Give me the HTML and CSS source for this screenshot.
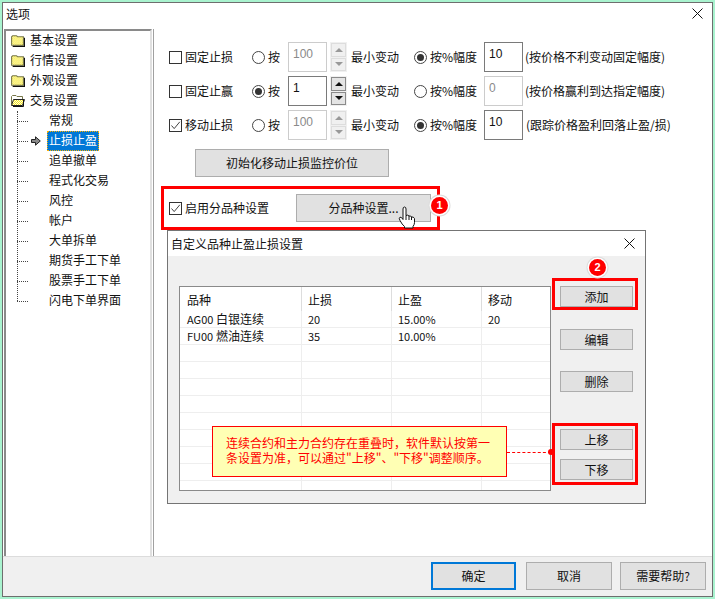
FILE: index.html
```html
<!DOCTYPE html>
<html lang="zh-CN">
<head>
<meta charset="utf-8">
<title>选项</title>
<link rel="stylesheet" href="styles.css">
</head>
<body>
<svg class="defs" aria-hidden="true">
  <defs>
    <pattern id="dither" width="2" height="2" patternUnits="userSpaceOnUse">
      <rect width="2" height="2" fill="#fffde0"/>
      <rect width="1" height="1" fill="#f4e620"/>
      <rect x="1" y="1" width="1" height="1" fill="#f4e620"/>
    </pattern>
    <symbol id="folder" viewBox="0 0 14 12">
      <path d="M1.5 10.5V2.5L2.5 1.5H6L7 2.5H12.5V10.5Z" fill="url(#dither)" stroke="#77774a"/>
      <path d="M13.5 3.5V11.5H2.5" fill="none" stroke="#111"/>
    </symbol>
    <symbol id="folder-open" viewBox="0 0 15 13">
      <path d="M1.5 10.5V2.5L2.5 1.5H6L7 2.5H12.5V5.5" fill="#fff" stroke="#77774a"/>
      <path d="M1.5 11.5L3.5 5.5H14.5L12.5 11.5Z" fill="url(#dither)" stroke="#222"/>
      <path d="M13.5 6V12.5H3" fill="none" stroke="#111"/>
    </symbol>
    <symbol id="tick" viewBox="0 0 11 11">
      <path d="M1.5 5.5L4.2 8.6L9.8 1.8" fill="none" stroke="#444" stroke-width="1"/>
    </symbol>
    <symbol id="cross" viewBox="0 0 11 11">
      <path d="M0.5 0.5L10.5 10.5M10.5 0.5L0.5 10.5" fill="none" stroke="#111" stroke-width="1"/>
    </symbol>
  </defs>
</svg>

<div class="window">
  <header class="titlebar">
    <span>选项</span>
    <svg class="close"><use href="#cross"/></svg>
  </header>

  <div class="main">
    <nav class="tree">
      <div class="node"><svg class="folder"><use href="#folder"/></svg>基本设置</div>
      <div class="node"><svg class="folder"><use href="#folder"/></svg>行情设置</div>
      <div class="node"><svg class="folder"><use href="#folder"/></svg>外观设置</div>
      <div class="node"><svg class="folder"><use href="#folder-open"/></svg>交易设置</div>
      <div class="kids">
        <div class="kid"><span class="slot"></span><span class="kid-text">常规</span></div>
        <div class="kid"><span class="slot"><svg class="arrow" viewBox="0 0 10 10"><path d="M0.5 3.5H4.5V0.8L9.3 5L4.5 9.2V6.5H0.5Z" fill="#8a8a8a" stroke="#222"/></svg></span><span class="kid-text selected">止损止盈</span></div>
        <div class="kid"><span class="slot"></span><span class="kid-text">追单撤单</span></div>
        <div class="kid"><span class="slot"></span><span class="kid-text">程式化交易</span></div>
        <div class="kid"><span class="slot"></span><span class="kid-text">风控</span></div>
        <div class="kid"><span class="slot"></span><span class="kid-text">帐户</span></div>
        <div class="kid"><span class="slot"></span><span class="kid-text">大单拆单</span></div>
        <div class="kid"><span class="slot"></span><span class="kid-text">期货手工下单</span></div>
        <div class="kid"><span class="slot"></span><span class="kid-text">股票手工下单</span></div>
        <div class="kid"><span class="slot"></span><span class="kid-text">闪电下单界面</span></div>
      </div>
    </nav>

    <section class="panel">
      <div class="grid">
        <label class="opt"><span class="check"></span>固定止损</label>
        <label class="opt"><span class="radio"></span>按</label>
        <div class="field off">100</div>
        <div class="spin off"><span class="up"></span><span class="down"></span></div>
        <span class="txt">最小变动</span>
        <label class="opt"><span class="radio on"></span>按%幅度</label>
        <div class="field">10</div>
        <span class="txt">(按价格不利变动固定幅度)</span>

        <label class="opt"><span class="check"></span>固定止赢</label>
        <label class="opt"><span class="radio on"></span>按</label>
        <div class="field">1</div>
        <div class="spin"><span class="up"></span><span class="down"></span></div>
        <span class="txt">最小变动</span>
        <label class="opt"><span class="radio"></span>按%幅度</label>
        <div class="field off">0</div>
        <span class="txt">(按价格赢利到达指定幅度)</span>

        <label class="opt"><span class="check"><svg class="tick"><use href="#tick"/></svg></span>移动止损</label>
        <label class="opt"><span class="radio"></span>按</label>
        <div class="field off">100</div>
        <div class="spin off"><span class="up"></span><span class="down"></span></div>
        <span class="txt">最小变动</span>
        <label class="opt"><span class="radio on"></span>按%幅度</label>
        <div class="field">10</div>
        <span class="txt shift">(跟踪价格盈利回落止盈/损)</span>
      </div>

      <button class="btn init">初始化移动止损监控价位</button>

      <div class="red-bar">
        <label class="opt"><span class="check"><svg class="tick"><use href="#tick"/></svg></span>启用分品种设置</label>
        <button class="btn variety">分品种设置...</button>
        <svg class="hand" viewBox="0 0 18 23">
          <path d="M5 3Q5 1 6.5 1Q8 1 8 3V9.5Q10 8.5 11 10Q13 9.5 13.5 11Q15.5 10.5 16.5 12.5V16.5Q16.5 18.5 15 20.5V22H6.5V20.5Q4 18.5 2 14.5Q0.5 11.8 2 11.2Q3.5 10.8 5 13.5Z" fill="#fff" stroke="#111"/>
          <path d="M8 9.5V14M11 10V14M13.5 11V14" fill="none" stroke="#111"/>
        </svg>
        <span class="badge one">1</span>
      </div>

      <div class="dialog">
        <header class="dialog-title">
          <span>自定义品种止盈止损设置</span>
          <svg class="close"><use href="#cross"/></svg>
        </header>
        <div class="dialog-body">
          <div class="table-wrap">
            <table class="table">
              <colgroup><col class="c1"><col class="c2"><col class="c3"><col class="c4"></colgroup>
              <thead><tr><th>品种</th><th>止损</th><th>止盈</th><th>移动</th></tr></thead>
              <tbody>
                <tr><td><span class="lat">AG00</span> 白银连续</td><td class="lat">20</td><td class="lat">15.00%</td><td class="lat">20</td></tr>
                <tr><td><span class="lat">FU00</span> 燃油连续</td><td class="lat">35</td><td class="lat">10.00%</td><td></td></tr>
                <tr><td></td><td></td><td></td><td></td></tr>
                <tr><td></td><td></td><td></td><td></td></tr>
                <tr><td></td><td></td><td></td><td></td></tr>
                <tr><td></td><td></td><td></td><td></td></tr>
                <tr><td></td><td></td><td></td><td></td></tr>
                <tr><td></td><td></td><td></td><td></td></tr>
                <tr><td></td><td></td><td></td><td></td></tr>
                <tr><td></td><td></td><td></td><td></td></tr>
                <tr><td></td><td></td><td></td><td></td></tr>
              </tbody>
            </table>
          </div>
          <div class="actions">
            <div class="red-add"><button class="btn act">添加</button></div>
            <button class="btn act plain edit">编辑</button>
            <button class="btn act plain del">删除</button>
            <div class="red-move">
              <button class="btn act">上移</button>
              <button class="btn act">下移</button>
            </div>
          </div>
        </div>
        <span class="badge two">2</span>
        <div class="note">连续合约和主力合约存在重叠时，软件默认按第一条设置为准，可以通过"上移"、"下移"调整顺序。</div>
        <div class="connector"></div>
        <div class="connector-dot"></div>
      </div>
    </section>
  </div>

  <footer class="footer">
    <button class="btn foot primary">确定</button>
    <button class="btn foot">取消</button>
    <button class="btn foot help">需要帮助?</button>
  </footer>
</div>
</body>
</html>
```

FILE: styles.css
```css
* { box-sizing: border-box; }

html, body {
  margin: 0;
  padding: 0;
  width: 715px;
  height: 599px;
  overflow: hidden;
  background: #a9f3cf;
}

body {
  padding: 2px;
  font: 12px/16px "Noto Sans CJK SC", "Noto Sans", sans-serif;
  color: #111;
}

.defs { display: block; width: 0; height: 0; }

.window {
  width: 711px;
  height: 595px;
  border: 1px solid #6e6e6e;
  background: #fff;
  display: flex;
  flex-direction: column;
}

.titlebar {
  height: 26px;
  flex: none;
  display: flex;
  align-items: center;
  justify-content: space-between;
  padding: 0 9px 5px 3px;
}

.close { width: 11px; height: 11px; flex: none; }

.main { flex: none; height: 527px; display: flex; }

/* tree */
.tree {
  width: 148px;
  margin-left: 1px;
  border-top: 2px solid #8a8a8a;
  border-left: 2px solid #8a8a8a;
  border-right: 2px solid #e0e0e0;
  flex: none;
}

.node {
  height: 20px;
  display: flex;
  align-items: center;
  gap: 5px;
  padding: 0 0 2px 4px;
}

.folder { width: 15px; height: 13px; flex: none; }

.kids { position: relative; margin-left: 11px; }

.kids::before {
  content: "";
  position: absolute;
  left: 0;
  top: 0;
  bottom: 10px;
  border-left: 1px dotted #444;
}

.kid { height: 20px; display: flex; align-items: center; }

.kid::before {
  content: "";
  width: 11px;
  flex: none;
  border-top: 1px dotted #444;
}

.slot {
  width: 19px;
  flex: none;
  display: flex;
  padding-left: 3px;
}

.arrow { width: 10px; height: 10px; }

.kid-text {
  height: 20px;
  line-height: 16px;
  padding: 0 1px;
  border: 1px solid transparent;
}

.kid-text.selected {
  background: #0078d7;
  color: #fff;
  border: 1px dotted #ffb000;
}

/* panel */
.panel {
  position: relative;
  flex: 1;
  margin-left: 1px;
  border-left: 1px solid #a0a0a0;
  padding: 13px 0 0 7px;
}

.grid {
  display: grid;
  grid-template-columns: 83px 36px 42px 21px 63px 70px 41px auto;
  grid-auto-rows: 30px;
  row-gap: 4px;
  align-items: center;
  margin-left: 8px;
}

.opt { display: flex; align-items: center; gap: 3px; }

.check {
  width: 13px;
  height: 13px;
  flex: none;
  border: 1px solid #333;
  background: #fff;
  display: block;
}

.tick { display: block; width: 11px; height: 11px; }

.radio {
  width: 13px;
  height: 13px;
  flex: none;
  border: 1px solid #444;
  border-radius: 50%;
  display: flex;
  align-items: center;
  justify-content: center;
}

.radio.on::after {
  content: "";
  width: 7px;
  height: 7px;
  border-radius: 50%;
  background: #333;
}

.field {
  width: 39px;
  height: 30px;
  border: 1px solid #7a7a7a;
  padding: 3px 0 0 4px;
  font: 12px/16px "Liberation Sans", sans-serif;
  color: #111;
}

.field.off { border-color: #ccc; color: #8a8a8a; }

.spin {
  width: 17px;
  height: 30px;
  display: flex;
  flex-direction: column;
  gap: 1px;
  padding: 1px;
  background: #f0f0f0;
}

.up, .down {
  flex: 1;
  border: 1px solid #8a8a8a;
  background: #e4e4e4;
  display: flex;
  align-items: center;
  justify-content: center;
}

.up::after, .down::after {
  content: "";
  border-left: 4px solid transparent;
  border-right: 4px solid transparent;
}

.up::after { border-bottom: 4px solid #111; }
.down::after { border-top: 4px solid #111; }

.spin.off .up, .spin.off .down { border-color: #ddd; background: #f0f0f0; }
.spin.off .up::after { border-bottom-color: #999; }
.spin.off .down::after { border-top-color: #999; }

.txt { white-space: nowrap; }
.shift { margin-left: 1px; }

.btn {
  font: inherit;
  color: #111;
  background: #e1e1e1;
  border: 1px solid #adadad;
  padding: 0;
  display: block;
  border-radius: 0;
}

.init { width: 194px; height: 28px; margin: 9px 0 0 34px; }

.red-bar {
  position: relative;
  width: 279px;
  height: 44px;
  margin: 9px 0 0 0;
  border: 3px solid #f00;
  display: flex;
  align-items: center;
  padding-left: 5px;
}

.red-bar .btn { width: 135px; height: 28px; margin-left: 27px; }

.hand { position: absolute; left: 234px; top: 17px; width: 18px; height: 23px; }

.badge {
  position: absolute;
  width: 17px;
  height: 17px;
  border-radius: 50%;
  background: #f00;
  color: #fff;
  font: bold 11px/17px "Liberation Sans", sans-serif;
  text-align: center;
  box-shadow: 0 0 0 1.5px #fff, 0 0 0 2.5px #ddd;
}

.badge.one { left: 267px; top: 8px; }
.badge.two { left: 421px; top: 28px; }

/* dialog */
.dialog {
  position: absolute;
  left: 13px;
  top: 201px;
  width: 479px;
  height: 274px;
  border: 1px solid #747474;
  background: #f0f0f0;
}

.dialog-title {
  height: 25px;
  background: #fff;
  display: flex;
  align-items: center;
  justify-content: space-between;
  padding: 0 10px 0 3px;
}

.dialog-body { display: flex; padding: 30px 0 0 11px; }

.table-wrap {
  width: 372px;
  height: 205px;
  flex: none;
  background: #fff;
  border: 1px solid #8a8a8a;
  overflow: hidden;
}

.table {
  width: 370px;
  table-layout: fixed;
  border-collapse: separate;
  border-spacing: 0;
}

.c1 { width: 122px; }
.c2, .c3 { width: 90px; }
.c4 { width: 68px; }

.table th, .table td {
  padding: 0 0 0 6px;
  font-weight: 400;
  text-align: left;
  white-space: nowrap;
  border-right: 1px solid #eee;
}

.table th { height: 24px; padding-top: 2px; border-right-color: #ddd; }
.table th:first-child, .table td:first-child { padding-left: 7px; }
.table th:last-child, .table td:last-child { border-right: 0; }

.table td {
  height: 17px;
  line-height: 16px;
  border-bottom: 1px solid #eee;
}

.lat { font-size: 11px; }

.actions {
  width: 86px;
  margin: -8px 0 0 1px;
  flex: none;
}

.red-add {
  height: 32px;
  border: 3px solid #f00;
  padding: 5px 0 0 5px;
}

.act { width: 73px; height: 21px; }

.plain { margin-left: 8px; }
.edit { margin-top: 19px; }
.del { margin-top: 21px; }

.red-move {
  height: 62px;
  margin-top: 31px;
  border: 3px solid #f00;
  padding: 3px 0 0 5px;
  display: flex;
  flex-direction: column;
  gap: 9px;
}

.note {
  position: absolute;
  left: 44px;
  top: 195px;
  width: 295px;
  height: 51px;
  padding: 8px 12px 0 13px;
  border: 1px solid #f00;
  background: #ffffb4;
  color: #f00;
  line-height: 15px;
}

.connector {
  position: absolute;
  left: 339px;
  top: 221px;
  width: 44px;
  border-top: 1px dashed #f00;
}

.connector-dot {
  position: absolute;
  left: 380px;
  top: 218px;
  width: 6px;
  height: 6px;
  border-radius: 50%;
  background: #f00;
}

/* footer */
.footer {
  flex: 1;
  background: #f0f0f0;
  border-top: 1px solid #dcdcdc;
  display: flex;
  justify-content: flex-end;
  padding: 5px 6px 0 0;
  gap: 8px;
}

.foot { width: 86px; height: 28px; }

.primary {
  width: 85px;
  margin-right: 2px;
  border: 2px solid #0078d7;
}
```
